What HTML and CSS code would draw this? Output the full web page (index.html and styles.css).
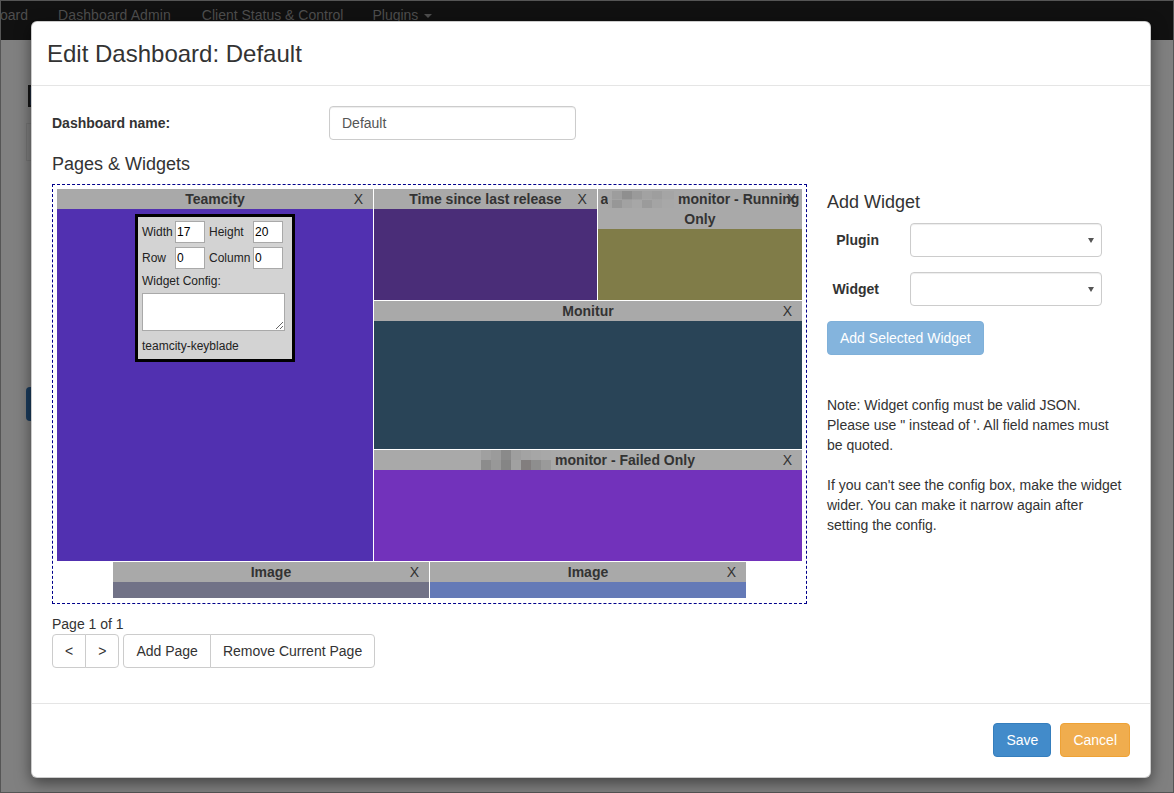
FILE: index.html
```html
<!DOCTYPE html>
<html lang="en">
<head>
<meta charset="utf-8">
<title>Edit Dashboard</title>
<link rel="stylesheet" href="styles.css">
</head>
<body>
<div class="screen">
  <nav class="navbar">
    <a class="nav-link brand">oard</a>
    <a class="nav-link">Dashboard Admin</a>
    <a class="nav-link">Client Status &amp; Control</a>
    <a class="nav-link">Plugins <span class="caret"></span></a>
  </nav>
  <main class="page">
    <div class="page-icon"></div>
    <div class="page-panel"></div>
    <div class="page-button"></div>
  </main>
</div>

<div class="modal">
  <header class="modal-header">
    <h3 class="modal-title">Edit Dashboard: Default</h3>
  </header>

  <div class="modal-body">
    <div class="name-row">
      <label class="field-label" for="dash-name">Dashboard name:</label>
      <input id="dash-name" class="text-input" type="text" value="Default">
    </div>

    <h4 class="section-title">Pages &amp; Widgets</h4>

    <div class="editor">
      <section class="pages">
        <div class="grid-frame">
          <div class="grid">
            <div class="widget" style="grid-area: 1 / 1 / span 20 / span 17; --tone: #5130b0">
              <div class="widget-title">Teamcity<span class="widget-close">X</span></div>
              <div class="widget-body">
                <div class="widget-config">
                  <div class="config-fields">
                    <label>Width</label><input type="text" value="17">
                    <label>Height</label><input type="text" value="20">
                    <label>Row</label><input type="text" value="0">
                    <label>Column</label><input type="text" value="0">
                  </div>
                  <div class="config-label">Widget Config:</div>
                  <textarea class="config-text"></textarea>
                  <div class="config-plugin">teamcity-keyblade</div>
                </div>
              </div>
            </div>

            <div class="widget" style="grid-area: 1 / 18 / span 6 / span 12; --tone: #4a2d78">
              <div class="widget-title">Time since last release<span class="widget-close">X</span></div>
              <div class="widget-body"></div>
            </div>

            <div class="widget" style="grid-area: 1 / 30 / span 6 / span 11; --tone: #807c48">
              <div class="widget-title">a<span class="mosaic mosaic-a"></span> monitor - Running Only<span class="widget-close close-tight">X</span></div>
              <div class="widget-body"></div>
            </div>

            <div class="widget" style="grid-area: 7 / 18 / span 8 / span 23; --tone: #294457">
              <div class="widget-title">Monitur<span class="widget-close">X</span></div>
              <div class="widget-body"></div>
            </div>

            <div class="widget" style="grid-area: 15 / 18 / span 6 / span 23; --tone: #7232bb">
              <div class="widget-title"><span class="mosaic mosaic-b"></span> monitor - Failed Only<span class="widget-close">X</span></div>
              <div class="widget-body"></div>
            </div>

            <div class="widget" style="grid-area: 21 / 4 / span 2 / span 17; --tone: #717287">
              <div class="widget-title">Image<span class="widget-close">X</span></div>
              <div class="widget-body"></div>
            </div>

            <div class="widget" style="grid-area: 21 / 21 / span 2 / span 17; --tone: #647ab7">
              <div class="widget-title">Image<span class="widget-close">X</span></div>
              <div class="widget-body"></div>
            </div>
          </div>
        </div>

        <div class="page-count">Page 1 of 1</div>
        <div class="toolbar">
          <div class="btn-group">
            <button class="btn btn-default" type="button">&lt;</button>
            <button class="btn btn-default" type="button">&gt;</button>
          </div>
          <div class="btn-group">
            <button class="btn btn-default" type="button">Add Page</button>
            <button class="btn btn-default" type="button">Remove Current Page</button>
          </div>
        </div>
      </section>

      <aside class="side">
        <h4 class="side-title">Add Widget</h4>
        <div class="side-form">
          <label class="side-label" for="plugin">Plugin</label>
          <div class="select-wrap"><select id="plugin" class="select"><option></option></select></div>
          <label class="side-label" for="widget">Widget</label>
          <div class="select-wrap"><select id="widget" class="select"><option></option></select></div>
        </div>
        <button class="btn btn-primary btn-disabled" type="button">Add Selected Widget</button>
        <p class="note">Note: Widget config must be valid JSON.<br>Please use " instead of '. All field names must<br>be quoted.<br><br>If you can't see the config box, make the widget<br>wider. You can make it narrow again after<br>setting the config.</p>
      </aside>
    </div>
  </div>

  <footer class="modal-footer">
    <button class="btn btn-primary" type="button">Save</button>
    <button class="btn btn-warning" type="button">Cancel</button>
  </footer>
</div>
</body>
</html>
```

FILE: styles.css
```css
* {
  box-sizing: border-box;
}

html, body {
  margin: 0;
  padding: 0;
}

body {
  width: 1174px;
  height: 793px;
  overflow: hidden;
  position: relative;
  font-family: "Liberation Sans", Arial, Helvetica, sans-serif;
  font-size: 14px;
  line-height: 20px;
  color: #333;
  background: #808080;
}

/* ---------- dimmed page behind the modal ---------- */
.screen {
  width: 1174px;
  height: 793px;
  border: 1px solid #555;
  background: #808080;
}

.navbar {
  display: flex;
  height: 39px;
  background: #111;
  padding-top: 4px;
}

.nav-link {
  padding: 0 15px;
  color: #4e4e4e;
  line-height: 20px;
  white-space: nowrap;
}

.nav-link.brand {
  margin-left: -16px;
}

.nav-link:nth-child(2) {
  padding-right: 16px;
  letter-spacing: 0.1px;
}

.nav-link:nth-child(3) {
  padding-right: 14px;
}

.caret {
  display: inline-block;
  width: 0;
  height: 0;
  margin-left: 2px;
  vertical-align: middle;
  border-top: 4px solid #4e4e4e;
  border-left: 4px solid transparent;
  border-right: 4px solid transparent;
}

.page {
  padding-left: 25px;
}

.page-icon {
  margin: 45px 0 0 2px;
  width: 60px;
  height: 22px;
  border: 2px solid #151515;
  background: #1c2a3c;
}

.page-panel {
  margin-top: 16px;
  width: 400px;
  height: 38px;
  border: 1px solid #767676;
}

.page-button {
  margin-top: 226px;
  width: 80px;
  height: 34px;
  border-radius: 4px;
  background: #1b3c5d;
}

/* ---------- modal ---------- */
.modal {
  position: absolute;
  left: 31px;
  top: 21px;
  width: 1120px;
  background: #fff;
  border: 1px solid rgba(0, 0, 0, 0.2);
  border-radius: 6px;
  box-shadow: 0 5px 15px rgba(0, 0, 0, 0.5);
}

.modal-header {
  padding: 15px;
  border-bottom: 1px solid #e5e5e5;
}

.modal-title {
  margin: 0;
  font-size: 24px;
  line-height: 33px;
  font-weight: normal;
  color: #333;
}

.modal-body {
  padding: 20px;
}

.name-row {
  display: grid;
  grid-template-columns: 277px 247px;
  align-items: center;
}

.field-label {
  font-weight: bold;
}

.text-input {
  height: 34px;
  padding: 6px 12px;
  font: inherit;
  color: #555;
  border: 1px solid #ccc;
  border-radius: 4px;
  box-shadow: inset 0 1px 1px rgba(0, 0, 0, 0.075);
}

.section-title {
  margin: 14px 0 10px;
  font-size: 18px;
  line-height: 20px;
  font-weight: normal;
}

.editor {
  display: flex;
  gap: 20px;
  align-items: flex-start;
}

.pages {
  width: 755px;
  flex: none;
}

/* ---------- widget grid ---------- */
.grid-frame {
  border: 1px dashed #00008b;
  padding: 4px 4px 5px;
}

.grid {
  display: grid;
  grid-template-columns: repeat(40, 1fr);
  grid-template-rows: repeat(22, 17.65px);
  gap: 1px;
}

.widget {
  display: flex;
  flex-direction: column;
  min-width: 0;
  min-height: 0;
  overflow: hidden;
}

.widget-title {
  position: relative;
  background: #a9a9a9;
  color: #333;
  font-weight: bold;
  line-height: 20px;
  text-align: center;
}

.widget-close {
  position: absolute;
  top: 0;
  right: 10px;
  font-weight: normal;
}

.widget-close.close-tight {
  right: 6px;
}

.widget-body {
  flex: 1;
  background: var(--tone);
}

.mosaic {
  display: inline-block;
  height: 18px;
  vertical-align: -4px;
}

.mosaic-a {
  width: 66px;
  height: 17px;
  background:
    linear-gradient(90deg, #a8a8a8 0 4px, #9d9d9d 4px 14px, #8f8f8f 14px 24px, #9a9a9a 24px 34px, #a2a2a2 34px 44px, #9e9e9e 44px 54px, #a5a5a5 54px 66px) top / 100% 50% no-repeat,
    linear-gradient(90deg, #a6a6a6 0 4px, #979797 4px 14px, #a2a2a2 14px 24px, #a7a7a7 24px 34px, #9b9b9b 34px 44px, #a4a4a4 44px 54px, #a8a8a8 54px 66px) bottom / 100% 50% no-repeat;
}

.mosaic-b {
  width: 70px;
  height: 20px;
  vertical-align: -5px;
  background:
    linear-gradient(90deg, #a0a0a0 0 10px, #9b9b9b 10px 20px, #8a8a8a 20px 30px, #9e9e9e 30px 40px, #a3a3a3 40px 50px, #a6a6a6 50px 60px, #a8a8a8 60px 70px) top / 100% 50% no-repeat,
    linear-gradient(90deg, #8c8c8c 0 10px, #989898 10px 20px, #858585 20px 30px, #a1a1a1 30px 40px, #827e7e 40px 50px, #8e8e8e 50px 60px, #9a9a9a 60px 70px) bottom / 100% 50% no-repeat;
}

/* ---------- widget config popup ---------- */
.widget-config {
  width: 160px;
  height: 148px;
  margin: 5px auto 0;
  padding: 4px 0 0 4px;
  border: 3px solid #000;
  background: #d3d3d3;
  font-size: 12px;
  line-height: 14px;
  color: #222;
}

.config-fields {
  display: grid;
  grid-template-columns: 29px 30px 40px 30px;
  grid-auto-rows: 22px;
  gap: 4px;
  align-items: center;
}

.config-fields input {
  width: 30px;
  height: 22px;
  padding: 0 1px;
  border: 1px solid #a9a9a9;
  font: 12px "Liberation Sans", Arial, sans-serif;
  color: #000;
  background: #fff;
}

.config-label {
  margin-top: 5px;
}

.config-text {
  display: block;
  width: 143px;
  height: 38px;
  margin: 5px 0 0;
  border: 1px solid #a9a9a9;
  background: #fff;
}

.config-plugin {
  margin-top: 8px;
}

/* ---------- pagination ---------- */
.page-count {
  margin-top: 10px;
}

.toolbar {
  display: flex;
  gap: 4px;
}

.btn-group {
  display: flex;
}

.btn {
  height: 34px;
  padding: 6px 12px;
  font: inherit;
  line-height: 20px;
  border: 1px solid transparent;
  border-radius: 4px;
  white-space: nowrap;
}

.btn-default {
  background: #fff;
  color: #333;
  border-color: #ccc;
}

.btn-group .btn:not(:first-child) {
  margin-left: -1px;
  border-top-left-radius: 0;
  border-bottom-left-radius: 0;
}

.btn-group .btn:not(:last-child) {
  border-top-right-radius: 0;
  border-bottom-right-radius: 0;
}

.btn-primary {
  background: #428bca;
  border-color: #357ebd;
  color: #fff;
}

.btn-warning {
  background: #f0ad4e;
  border-color: #eea236;
  color: #fff;
}

.btn-disabled {
  background: #84b4dd;
  border-color: #7fb0d9;
}

/* ---------- side column ---------- */
.side {
  width: 310px;
}

.side-title {
  margin: 8px 0 0;
  font-size: 18px;
  line-height: 20px;
  font-weight: normal;
}

.side-form {
  display: grid;
  grid-template-columns: 52px 192px;
  column-gap: 31px;
  row-gap: 15px;
  align-items: center;
  margin-top: 11px;
}

.side-label {
  font-weight: bold;
  text-align: right;
}

.select-wrap {
  position: relative;
}

.select-wrap::after {
  content: "";
  position: absolute;
  right: 8px;
  top: 15px;
  border-top: 5px solid #555;
  border-left: 3px solid transparent;
  border-right: 3px solid transparent;
  pointer-events: none;
}

.select {
  display: block;
  width: 192px;
  height: 34px;
  appearance: none;
  -webkit-appearance: none;
  border: 1px solid #ccc;
  border-radius: 4px;
  background: #fff;
  box-shadow: inset 0 1px 1px rgba(0, 0, 0, 0.075);
  font: inherit;
}

.side .btn-disabled {
  margin-top: 15px;
}

.note {
  margin: 40px 0 0;
  white-space: nowrap;
}

/* ---------- footer ---------- */
.modal-footer {
  display: flex;
  justify-content: flex-end;
  gap: 9px;
  margin-top: 15px;
  padding: 19px 20px 20px;
  border-top: 1px solid #e5e5e5;
}
```
